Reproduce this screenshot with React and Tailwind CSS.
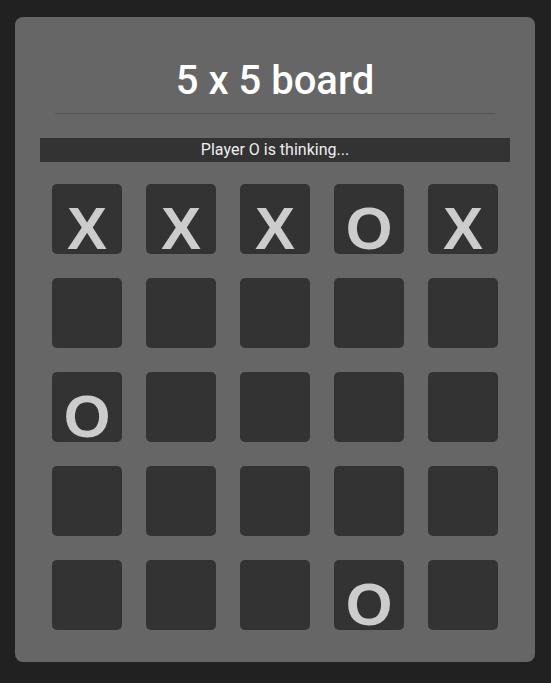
import React from "react";

const board = [
  ["X", "X", "X", "O", "X"],
  ["", "", "", "", ""],
  ["O", "", "", "", ""],
  ["", "", "", "", ""],
  ["", "", "", "O", ""],
];

function Cell({ value }) {
  return (
    <div className="w-[70px] h-[70px] rounded-[5px] bg-[#333333] flex items-end justify-center">
      {value && (
        <span
          className="block text-[60px] leading-[50px] font-bold text-[#cccccc]"
          style={{ fontFamily: '"Liberation Sans", Arial, sans-serif' }}
        >
          {value}
        </span>
      )}
    </div>
  );
}

export default function App() {
  return (
    <div
      className="min-h-[683px] bg-[#212121] pl-[15px] pt-[17px] pb-[21px]"
      style={{ fontFamily: 'Roboto, "Noto Sans", sans-serif' }}
    >
      <div className="w-[520px] rounded-[8px] bg-[#666666] pt-[40px] pb-[32px] flex flex-col items-center">
        <h1 className="text-[40px] font-medium text-white leading-[47px]">5 x 5 board</h1>
        <div className="mt-[9px] w-[440px] h-px bg-[#555555]" />

        <div className="mt-[24px] w-[470px] h-[24px] bg-[#333333] text-[16px] leading-[24px] text-center text-[#eeeeee]">
          Player O is thinking...
        </div>

        {/* Board */}
        <div className="mt-[22px] grid grid-cols-5 gap-[24px]">
          {board.flat().map((v, i) => (
            <Cell key={i} value={v} />
          ))}
        </div>
      </div>
    </div>
  );
}
